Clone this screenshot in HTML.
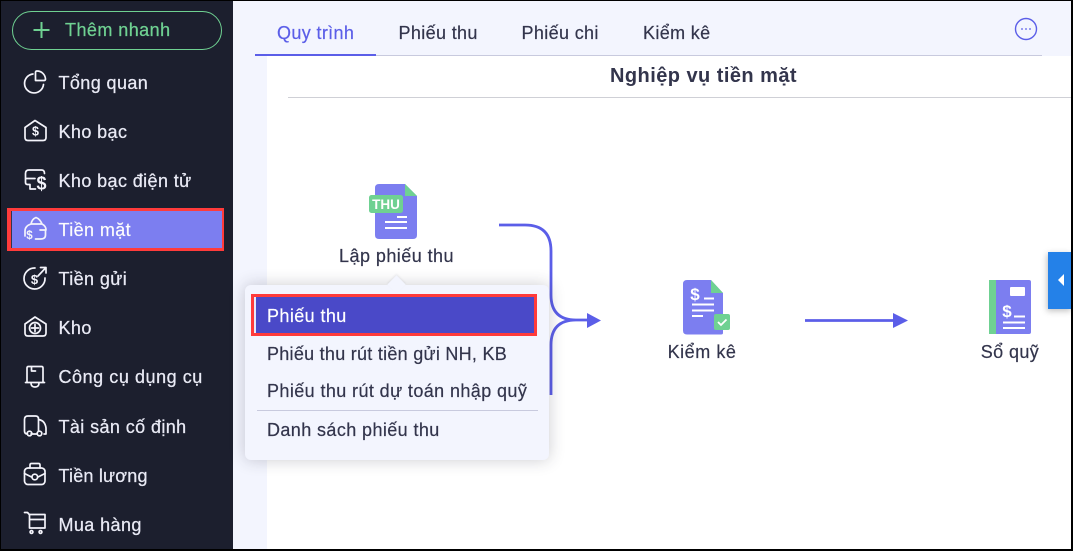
<!DOCTYPE html>
<html lang="vi"><head><meta charset="utf-8"><title>Nghiệp vụ tiền mặt</title>
<style>
html,body{margin:0;padding:0}
body{width:1073px;height:551px;overflow:hidden;position:relative;background:#f3f5fe;font-family:"Liberation Sans","DejaVu Sans",sans-serif;color:#33354c}
div,span,svg{position:absolute;box-sizing:border-box}
.t{white-space:nowrap;line-height:22px;font-size:18px;letter-spacing:.4px}
.m{left:58.500px;color:#e9eaf5;-webkit-text-stroke:.25px #e9eaf5}
.tab{top:22px;font-size:18px;letter-spacing:.36px;white-space:nowrap;line-height:22px;-webkit-text-stroke:.2px currentColor}
.p{left:267px;font-size:18px;letter-spacing:.4px;white-space:nowrap;line-height:22px;-webkit-text-stroke:.2px currentColor}
.lb{font-size:18px;letter-spacing:.45px;white-space:nowrap;line-height:22px;text-align:center;transform:translateX(-50%);-webkit-text-stroke:.2px currentColor}
svg text{font-family:"Liberation Sans",sans-serif;font-weight:700}
</style></head><body>
<div style="left:0;top:0;width:233px;height:551px;background:#1c1f2e"></div>
<div style="left:267px;top:56px;width:806px;height:495px;background:#fff"></div>

<div style="left:12px;top:11px;width:210px;height:39px;border:1.3px solid #6fd192;border-radius:20px"></div>
<svg style="left:33px;top:21px" width="17" height="18"><path d="M8.500 1v16M0.500 9h16" stroke="#6fd192" stroke-width="2" fill="none"/></svg>
<div class="t" style="left:65px;top:19px;color:#6fd192;letter-spacing:.45px;-webkit-text-stroke:.25px #6fd192">Thêm nhanh</div>

<div style="left:7px;top:208px;width:217px;height:43px;background:#ff3b3b"></div>
<div style="left:11px;top:211px;width:211px;height:37px;background:#7c7ef0;border-left:1px solid #33354c"></div>

<div class="t m" style="top:72px">Tổng quan</div>
<div class="t m" style="top:121px">Kho bạc</div>
<div class="t m" style="top:170px">Kho bạc điện tử</div>
<div class="t m" style="top:219px;color:#fff">Tiền mặt</div>
<div class="t m" style="top:268px">Tiền gửi</div>
<div class="t m" style="top:317px">Kho</div>
<div class="t m" style="top:366px;letter-spacing:.55px">Công cụ dụng cụ</div>
<div class="t m" style="top:416px">Tài sản cố định</div>
<div class="t m" style="top:465px;letter-spacing:.2px">Tiền lương</div>
<div class="t m" style="top:514px">Mua hàng</div>

<svg style="left:0;top:0" width="60" height="551" fill="none" stroke="#f4f4fb" stroke-width="1.700" stroke-linecap="round" stroke-linejoin="round">
<path d="M33 74a9.500 9.500 0 1 0 10.500 10.500"/><path d="M35.500 80.500V72.500q0-1.500 1.500-1.500a8.500 8.500 0 0 1 8.500 8q0 1.500-1.500 1.500z"/>
<path d="M25 127.500l10-7 11 7v10q0 3-3 3H28q-3 0-3-3z"/><text x="35.500" y="135.500" font-size="12.500" fill="#f4f4fb" stroke="none" text-anchor="middle">$</text>
<path d="M44.500 173.500q0-3.500-3-3.500H29q-3.500 0-3.500 3.500v9q0 2 2 2h2.500v4.500h5.500M26 178.500h9"/><text x="41.500" y="189.500" font-size="18" fill="#f4f4fb" stroke="none" text-anchor="middle">$</text>
<path d="M25 236v-5q0-5 6-7q1-5 5-6.500q4 1.500 6 6.500q4 2 4 6M31 224h11M40 230h5.500v5q0 4-5 4h-5"/><text x="29.500" y="239" font-size="11.500" fill="#f4f4fb" stroke="none" text-anchor="middle">$</text>
<path d="M45 278a10.500 10.500 0 1 1-10-10"/><path d="M38 276l8-8.500M40.500 267.500h5.500v5.500"/><text x="34.500" y="284" font-size="13" fill="#f4f4fb" stroke="none" text-anchor="middle">$</text>
<path d="M25 324l10-7 11 7v9q0 3-3 3H28q-3 0-3-3z"/><circle cx="35" cy="328" r="5.500"/><path d="M35 324.500v7M31.500 328h7"/>
<path d="M27 382V368q0-1.500 1.500-1.500h13q1.500 0 1.500 1.500v14M31.500 367v4h4M25.500 382.500h19M31 383q0 4 4 4t4-4"/>
<path d="M38.500 431V419q0-3-3-3H28q-3.500 0-3.500 3.500V431q0 3 3 3M38.500 419.500q6.500 1 7.500 8.500v6h-2M31 434h6"/><circle cx="29.500" cy="433.500" r="2.300"/><circle cx="39.500" cy="433.500" r="2.300"/>
<rect x="24.500" y="468" width="20.500" height="16.500" rx="3.500"/><path d="M30 468v-3q0-1.500 1.500-1.500h7q1.500 0 1.500 1.500v3M24.500 473.500l7 3.500M45 473.500l-7 3.500"/><circle cx="34.800" cy="477" r="2.800"/>
<path d="M24.500 512.500h3l1.800 2h15.700v13.500H29.500v-13.500M30 519.500h14.500"/><circle cx="31.500" cy="532" r="1.400"/><circle cx="40.500" cy="532" r="1.400"/>
</svg>

<div style="left:255px;top:55px;width:787px;height:1px;background:#c8cade"></div>
<div style="left:255px;top:54px;width:121px;height:2px;background:#5b5ee8"></div>
<div class="tab" style="left:277px;color:#5b5ee8">Quy trình</div>
<div class="tab" style="left:398.500px">Phiếu thu</div>
<div class="tab" style="left:521.500px">Phiếu chi</div>
<div class="tab" style="left:643px">Kiểm kê</div>
<svg style="left:1014px;top:17px" width="24" height="24" fill="none"><circle cx="12" cy="12" r="10.500" stroke="#5b5ee8" stroke-width="1.400"/><circle cx="8" cy="12" r=".9" fill="#5b5ee8"/><circle cx="12" cy="12" r=".9" fill="#5b5ee8"/><circle cx="16" cy="12" r=".9" fill="#5b5ee8"/></svg>

<div class="t" style="left:610px;top:65px;font-size:20px;letter-spacing:.45px;font-weight:700;color:#33354c">Nghiệp vụ tiền mặt</div>
<div style="left:288px;top:97px;width:783px;height:1px;background:#cfd0d6"></div>

<svg style="left:0;top:0" width="1073" height="551" fill="none">
<path d="M499 225h26q26 0 26 26v44q0 25 25 25h14M551 395v-50q0-25 25-25" stroke="#5b5ee8" stroke-width="2.800"/>
<path d="M587 313l14 7.500-14 7.500z" fill="#5b5ee8"/>
<path d="M805 320.500h90" stroke="#5b5ee8" stroke-width="2.800"/><path d="M893 313l15 7.500-15 7.500z" fill="#5b5ee8"/>

<path d="M375 188q0-4 4-4h26l12 12v39q0 4-4 4h-34q-4 0-4-4z" fill="#7c7ef0"/>
<path d="M405 184l12 12h-12z" fill="#6fd192"/>
<rect x="369" y="195" width="34" height="18" rx="2.500" fill="#6fd192"/>
<text x="386" y="209" font-size="13.500" fill="#fff" text-anchor="middle">THU</text>
<path d="M397 217h10M385 222h22M385 228h22" stroke="#fff" stroke-width="2"/>

<path d="M683 284q0-4 4-4h24l12 13v40q0 1.500-2 1.500h-34q-4 0-4-4z" fill="#7c7ef0"/>
<path d="M711 280l12 13h-12z" fill="#6fd192"/>
<text x="695" y="300" font-size="17" fill="#fff" text-anchor="middle">$</text>
<path d="M704 298.500h10M692 304.500h22M692 310.500h22M692 316h11" stroke="#fff" stroke-width="2"/>
<rect x="714" y="314" width="16" height="16" rx="2" fill="#6fd192"/>
<path d="M718 322l3 3 5.500-5.500" stroke="#fff" stroke-width="1.800"/>

<rect x="989" y="280" width="8" height="54" fill="#6fd192"/>
<path d="M996 280h33q2 0 2 2v50q0 2-2 2h-33z" fill="#7c7ef0"/>
<rect x="1010" y="287" width="15" height="9" rx="1" fill="#fff"/>
<text x="1007" y="317" font-size="17" fill="#fff" text-anchor="middle">$</text>
<path d="M1014 316.500h11M1003 322.500h22M1003 328h22" stroke="#fff" stroke-width="2"/>
</svg>

<div class="lb" style="left:396.500px;top:245px">Lập phiếu thu</div>
<div class="lb" style="left:702px;top:341px;letter-spacing:.55px">Kiểm kê</div>
<div class="lb" style="left:1010px;top:341px;letter-spacing:.4px">Sổ quỹ</div>

<div style="left:1048px;top:252px;width:24px;height:57px;background:#2481e8;box-shadow:-1px 2px 6px rgba(0,0,0,.25)"></div>
<svg style="left:1057px;top:273px" width="8" height="14"><path d="M7 1v12L1 7z" fill="#fff"/></svg>

<div style="left:245px;top:285px;width:304px;height:175px;background:#f3f5fe;border-radius:6px;box-shadow:0 0 16px rgba(40,40,60,.24)"></div>
<div style="left:390px;top:278px;width:13px;height:13px;background:#f3f5fe;transform:rotate(45deg);box-shadow:-1px -1px 2px rgba(40,40,60,.08)"></div>
<div style="left:251px;top:294px;width:286px;height:42px;background:#ff3b3b"></div>
<div style="left:254px;top:297px;width:280px;height:36px;background:#4a49c8;border-left:2px solid #e6e7fa"></div>
<div class="p" style="top:305px;color:#fff">Phiếu thu</div>
<div class="p" style="top:343px;letter-spacing:.27px">Phiếu thu rút tiền gửi NH, KB</div>
<div class="p" style="top:380px">Phiếu thu rút dự toán nhập quỹ</div>
<div style="left:257px;top:410px;width:281px;height:1px;background:#c8cade"></div>
<div class="p" style="top:419px">Danh sách phiếu thu</div>

<div style="left:0;top:0;width:1073px;height:551px;border:1px solid #000;border-width:1px 2px 2px 1px"></div>
</body></html>
